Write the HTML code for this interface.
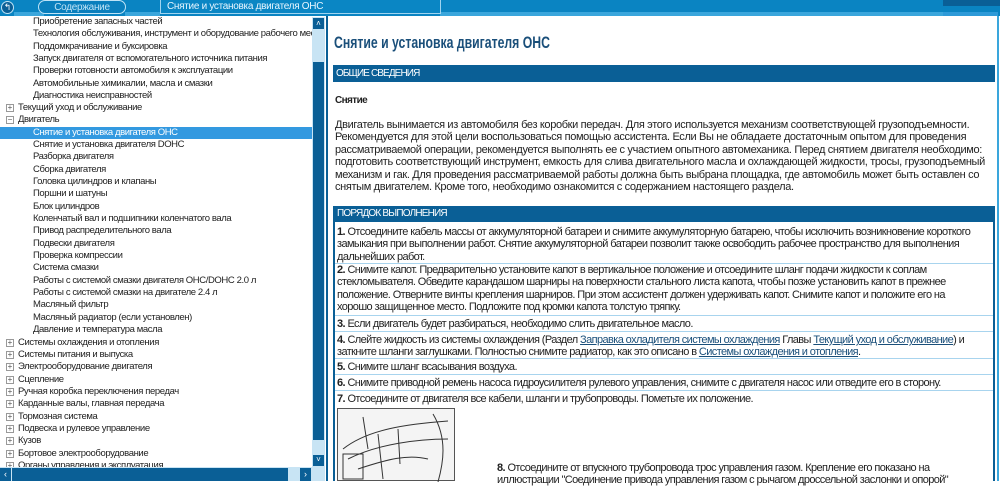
<!DOCTYPE html>
<html><head><meta charset="utf-8"><style>
*{margin:0;padding:0;box-sizing:border-box}
body{width:1000px;height:481px;overflow:hidden;background:#fff;font-family:"Liberation Sans",Arial,sans-serif;position:relative}
.top{position:absolute;left:0;top:0;width:1000px;height:16px;background:#0a84c2}
.stripe{position:absolute;top:12px;height:4px;background:#3aa6dc}
.tree{position:absolute;left:0;top:0;width:312px;height:467px;overflow:hidden}
.tree div{position:absolute;font-size:9.5px;color:#222;white-space:nowrap;height:12px;line-height:12px;letter-spacing:-0.4px}
.pm{position:absolute;width:8px;height:8px;border:1px solid #999;font-size:8px;line-height:6px;text-align:center;color:#555}
.c{position:absolute;font-size:11px;line-height:12.4px;color:#222;letter-spacing:-0.35px}
.i{letter-spacing:-0.6px}
.sep{position:absolute;left:335px;width:658px;height:1px;background:#a8d4ee}
b{font-weight:bold}
a{color:#1a4f7a;text-decoration:underline}
</style></head><body>
<div class="top"></div>
<div class="stripe" style="left:14px;width:30px"></div>
<div class="stripe" style="left:125px;width:35px"></div>
<div class="stripe" style="left:440px;width:503px"></div>
<div class="stripe" style="left:943px;width:55px;background:#2e9ad8"></div>
<div style="position:absolute;left:943px;top:0;width:57px;height:6px;background:#0a5f96"></div>
<div style="position:absolute;left:1px;top:1px;width:13px;height:13px;border-radius:50%;background:#0a5f96;border:1px solid #bfe3f6;color:#fff;font-size:9px;line-height:11px;text-align:center">↰</div>
<div style="position:absolute;left:38px;top:0;width:88px;height:14px;border:1px solid #bfe3f6;background:#0a7fbd;color:#bfe3f6;font-size:10px;line-height:13px;text-align:center;border-radius:8px;letter-spacing:-0.3px">Содержание</div>
<div style="position:absolute;left:160px;top:0;width:281px;height:14px;border:1px solid #9fd4f0;border-top:none;background:#0a86c4;color:#e8f6ff;font-size:10px;line-height:13px;padding-left:6px;letter-spacing:-0.3px">Снятие и установка двигателя ОНС</div>

<div class="tree">
<div style="left:0;top:127px;width:312px;height:12px;background:#3399e0"></div>
<div style="left:33px;top:16px">Приобретение запасных частей</div>
<div style="left:33px;top:28px">Технология обслуживания, инструмент и оборудование рабочего места</div>
<div style="left:33px;top:41px">Поддомкрачивание и буксировка</div>
<div style="left:33px;top:53px">Запуск двигателя от вспомогательного источника питания</div>
<div style="left:33px;top:65px">Проверки готовности автомобиля к эксплуатации</div>
<div style="left:33px;top:78px">Автомобильные химикалии, масла и смазки</div>
<div style="left:33px;top:90px">Диагностика неисправностей</div>
<div style="left:18px;top:102px">Текущий уход и обслуживание</div>
<div style="left:18px;top:114px">Двигатель</div>
<div style="left:33px;top:127px;color:#fff">Снятие и установка двигателя ОНС</div>
<div style="left:33px;top:139px">Снятие и установка двигателя DOHC</div>
<div style="left:33px;top:151px">Разборка двигателя</div>
<div style="left:33px;top:164px">Сборка двигателя</div>
<div style="left:33px;top:176px">Головка цилиндров и клапаны</div>
<div style="left:33px;top:188px">Поршни и шатуны</div>
<div style="left:33px;top:201px">Блок цилиндров</div>
<div style="left:33px;top:213px">Коленчатый вал и подшипники коленчатого вала</div>
<div style="left:33px;top:225px">Привод распределительного вала</div>
<div style="left:33px;top:238px">Подвески двигателя</div>
<div style="left:33px;top:250px">Проверка компрессии</div>
<div style="left:33px;top:262px">Система смазки</div>
<div style="left:33px;top:275px">Работы с системой смазки двигателя OHC/DOHC 2.0 л</div>
<div style="left:33px;top:287px">Работы с системой смазки на двигателе 2.4 л</div>
<div style="left:33px;top:299px">Масляный фильтр</div>
<div style="left:33px;top:312px">Масляный радиатор (если установлен)</div>
<div style="left:33px;top:324px">Давление и температура масла</div>
<div style="left:18px;top:337px">Системы охлаждения и отопления</div>
<div style="left:18px;top:349px">Системы питания и выпуска</div>
<div style="left:18px;top:361px">Электрооборудование двигателя</div>
<div style="left:18px;top:374px">Сцепление</div>
<div style="left:18px;top:386px">Ручная коробка переключения передач</div>
<div style="left:18px;top:398px">Карданные валы, главная передача</div>
<div style="left:18px;top:411px">Тормозная система</div>
<div style="left:18px;top:423px">Подвеска и рулевое управление</div>
<div style="left:18px;top:435px">Кузов</div>
<div style="left:18px;top:448px">Бортовое электрооборудование</div>
<div style="left:18px;top:460px">Органы управления и эксплуатация</div>
</div>
<div class="pm" style="left:6px;top:104px">+</div>
<div class="pm" style="left:6px;top:116px">−</div>
<div class="pm" style="left:6px;top:339px">+</div>
<div class="pm" style="left:6px;top:351px">+</div>
<div class="pm" style="left:6px;top:363px">+</div>
<div class="pm" style="left:6px;top:376px">+</div>
<div class="pm" style="left:6px;top:388px">+</div>
<div class="pm" style="left:6px;top:400px">+</div>
<div class="pm" style="left:6px;top:413px">+</div>
<div class="pm" style="left:6px;top:425px">+</div>
<div class="pm" style="left:6px;top:437px">+</div>
<div class="pm" style="left:6px;top:450px">+</div>
<div class="pm" style="left:6px;top:462px">+</div>

<div style="position:absolute;left:312px;top:17px;width:13px;height:450px;background:#c8e4f4"></div>
<div style="position:absolute;left:313px;top:18px;width:11px;height:11px;background:#0a5f96;color:#fff;font-size:8px;line-height:11px;text-align:center">˄</div>
<div style="position:absolute;left:313px;top:62px;width:11px;height:378px;background:#0a5f96"></div>
<div style="position:absolute;left:313px;top:455px;width:11px;height:11px;background:#0a5f96;color:#fff;font-size:8px;line-height:9px;text-align:center">˅</div>
<div style="position:absolute;left:0;top:467px;width:325px;height:14px;background:#c8e4f4"></div>
<div style="position:absolute;left:0;top:468px;width:11px;height:13px;background:#0a5f96;color:#fff;font-size:9px;line-height:13px;text-align:center">‹</div>
<div style="position:absolute;left:12px;top:468px;width:276px;height:13px;background:#0a5f96"></div>
<div style="position:absolute;left:300px;top:468px;width:11px;height:13px;background:#0a5f96;color:#fff;font-size:9px;line-height:13px;text-align:center">›</div>
<div style="position:absolute;left:326px;top:16px;width:2px;height:465px;background:#0a5f96"></div>
<div style="position:absolute;left:997px;top:16px;width:2px;height:465px;background:#3aa6dc"></div>

<div style="position:absolute;left:334px;top:33px;font-size:17px;font-weight:bold;color:#1a4f7a;transform:scaleX(0.72);transform-origin:left;white-space:nowrap">Снятие и установка двигателя ОНС</div>
<div style="position:absolute;left:333px;top:65px;width:662px;height:17px;background:#0a5f96;color:#fff;font-size:10px;line-height:17px;padding-left:3px;letter-spacing:-0.9px">ОБЩИЕ СВЕДЕНИЯ</div>
<div class="c" style="left:335px;top:95px;font-weight:bold;font-size:10px;letter-spacing:-0.6px">Снятие</div>
<div class="c" style="left:335px;top:119px;width:660px">Двигатель вынимается из автомобиля без коробки передач. Для этого используется механизм соответствующей грузоподъемности. Рекомендуется для этой цели воспользоваться помощью ассистента. Если Вы не обладаете достаточным опытом для проведения рассматриваемой операции, рекомендуется выполнять ее с участием опытного автомеханика. Перед снятием двигателя необходимо: подготовить соответствующий инструмент, емкость для слива двигательного масла и охлаждающей жидкости, тросы, грузоподъемный механизм и гак. Для проведения рассматриваемой работы должна быть выбрана площадка, где автомобиль может быть оставлен со снятым двигателем. Кроме того, необходимо ознакомится с содержанием настоящего раздела.</div>

<div style="position:absolute;left:333px;top:206px;width:662px;height:275px;border:2px solid #0a5f96;border-bottom:none"></div>
<div style="position:absolute;left:333px;top:206px;width:662px;height:16px;background:#0a5f96;color:#fff;font-size:10px;line-height:16px;padding-left:4px;letter-spacing:-0.8px">ПОРЯДОК ВЫПОЛНЕНИЯ</div>
<div class="c i" style="left:337px;top:226px;width:645px"><b>1.</b> Отсоедините кабель массы от аккумуляторной батареи и снимите аккумуляторную батарею, чтобы исключить возникновение короткого замыкания при выполнении работ. Снятие аккумуляторной батареи позволит также освободить рабочее пространство для выполнения дальнейших работ.</div>
<div class="sep" style="top:263px"></div>
<div class="c i" style="left:337px;top:264px;width:635px"><b>2.</b> Снимите капот. Предварительно установите капот в вертикальное положение и отсоедините шланг подачи жидкости к соплам стекломывателя. Обведите карандашом шарниры на поверхности стального листа капота, чтобы позже установить капот в прежнее положение. Отверните винты крепления шарниров. При этом ассистент должен удерживать капот. Снимите капот и положите его на хорошо защищенное место. Подложите под кромки капота толстую тряпку.</div>
<div class="sep" style="top:315px"></div>
<div class="c i" style="left:337px;top:318px"><b>3.</b> Если двигатель будет разбираться, необходимо слить двигательное масло.</div>
<div class="sep" style="top:331px"></div>
<div class="c i" style="left:337px;top:334px;width:655px"><b>4.</b> Слейте жидкость из системы охлаждения (Раздел <a>Заправка охладителя системы охлаждения</a> Главы <a>Текущий уход и обслуживание</a>) и заткните шланги заглушками. Полностью снимите радиатор, как это описано в <a>Системы охлаждения и отопления</a>.</div>
<div class="sep" style="top:358px"></div>
<div class="c i" style="left:337px;top:361px"><b>5.</b> Снимите шланг всасывания воздуха.</div>
<div class="sep" style="top:374px"></div>
<div class="c i" style="left:337px;top:377px"><b>6.</b> Снимите приводной ремень насоса гидроусилителя рулевого управления, снимите с двигателя насос или отведите его в сторону.</div>
<div class="sep" style="top:390px"></div>
<div class="c i" style="left:337px;top:393px"><b>7.</b> Отсоедините от двигателя все кабели, шланги и трубопроводы. Пометьте их положение.</div>
<div style="position:absolute;left:337px;top:408px;width:118px;height:73px;border:1px solid #555;background:#f4f4f4">
<svg width="118" height="73" viewBox="0 0 118 73" fill="none" stroke="#333" stroke-width="1"><path d="M5 40 C30 20 70 15 110 12"/><path d="M10 50 C40 35 80 30 110 30"/><path d="M20 60 C50 50 70 45 90 50"/><path d="M40 25 L45 70"/><path d="M60 20 L62 55"/><rect x="5" y="45" width="20" height="25"/><path d="M95 5 C110 30 105 55 100 73"/><path d="M25 8 L30 40"/></svg></div>
<div class="c i" style="left:497px;top:462px;width:470px"><b>8.</b> Отсоедините от впускного трубопровода трос управления газом. Крепление его показано на иллюстрации "Соединение привода управления газом с рычагом дроссельной заслонки и опорой"</div>
</body></html>
